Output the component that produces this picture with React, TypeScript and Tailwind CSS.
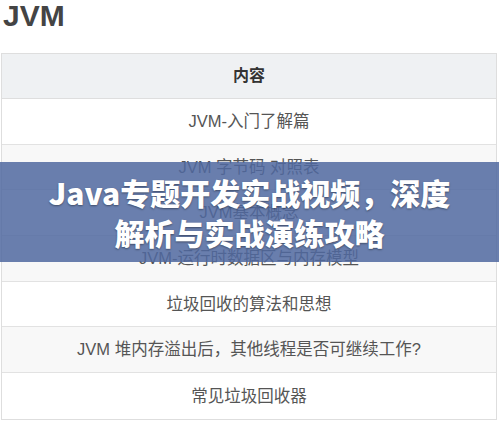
const rows = [
  'JVM-入门了解篇',
  'JVM 字节码 对照表',
  'JVM基本概念',
  'JVM-运行时数据区与内存模型',
  '垃圾回收的算法和思想',
  'JVM 堆内存溢出后，其他线程是否可继续工作?',
  '常见垃圾回收器',
];

export default function App() {
  return (
    <div className="relative h-[424px] w-[499px] overflow-hidden bg-white font-['Liberation_Sans','Noto_Sans_CJK_SC',sans-serif]">
      <h1 className="pl-[3px] pt-[1px] text-[30px] font-bold leading-[30px] text-[#444]">JVM</h1>

      <div className="ml-px mt-[22px] w-[496px] border border-[#dedede]">
        <div className="flex h-[45px] items-center justify-center border-b border-[#dedede] bg-[#eff1f3] text-[16px] font-bold text-[#333]">
          内容
        </div>
        {rows.map((r, i) => (
          <div
            key={r}
            className={`flex h-[45.7px] items-center justify-center border-b border-[#e2e2e2] text-[16.5px] text-[#555] last:border-b-0 ${
              i % 2 === 1 ? 'bg-[#f8f8f8]' : 'bg-white'
            }`}
          >
            {r}
          </div>
        ))}
      </div>

      <div className="absolute left-0 top-[162px] flex h-[100px] w-full flex-col items-center justify-center bg-[rgba(80,105,160,0.85)] text-[30px] font-black leading-[40px] text-white [text-shadow:0_1px_2px_rgba(0,0,0,0.4)] font-['Noto_Sans_CJK_SC',sans-serif]">
        <div>Java专题开发实战视频，深度</div>
        <div>解析与实战演练攻略</div>
      </div>
    </div>
  );
}
